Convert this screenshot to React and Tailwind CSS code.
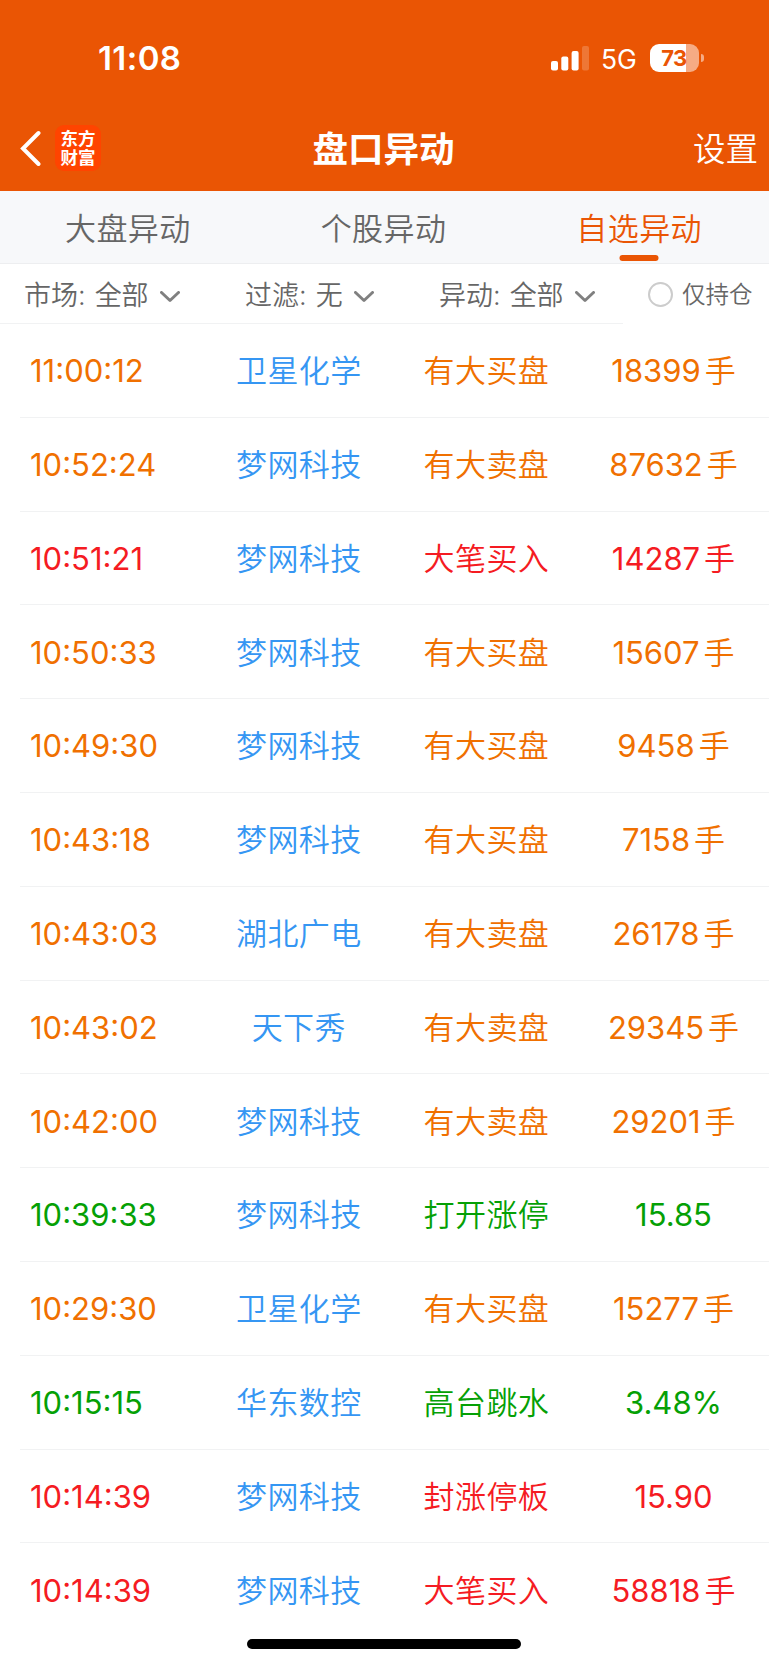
import { useState } from "react"
import clsx from "clsx"

const TABS = ["大盘异动", "个股异动", "自选异动"]

const FILTERS = [
  { label: "市场:", value: "全部", className: "w-[221px]" },
  { label: "过滤:", value: "无", className: "w-[194px]" },
  { label: "异动:", value: "全部", className: "w-[184px]" },
]

const COLORS = {
  orange: "text-[#f07000]",
  red: "text-[#f51b22]",
  green: "text-[#05a005]",
}

const ROWS = [
  { time: "11:00:12", name: "卫星化学", type: "有大买盘", value: "18399", unit: "手", color: "orange" },
  { time: "10:52:24", name: "梦网科技", type: "有大卖盘", value: "87632", unit: "手", color: "orange" },
  { time: "10:51:21", name: "梦网科技", type: "大笔买入", value: "14287", unit: "手", color: "red" },
  { time: "10:50:33", name: "梦网科技", type: "有大买盘", value: "15607", unit: "手", color: "orange" },
  { time: "10:49:30", name: "梦网科技", type: "有大买盘", value: "9458", unit: "手", color: "orange" },
  { time: "10:43:18", name: "梦网科技", type: "有大买盘", value: "7158", unit: "手", color: "orange" },
  { time: "10:43:03", name: "湖北广电", type: "有大卖盘", value: "26178", unit: "手", color: "orange" },
  { time: "10:43:02", name: "天下秀", type: "有大卖盘", value: "29345", unit: "手", color: "orange" },
  { time: "10:42:00", name: "梦网科技", type: "有大卖盘", value: "29201", unit: "手", color: "orange" },
  { time: "10:39:33", name: "梦网科技", type: "打开涨停", value: "15.85", color: "green" },
  { time: "10:29:30", name: "卫星化学", type: "有大买盘", value: "15277", unit: "手", color: "orange" },
  { time: "10:15:15", name: "华东数控", type: "高台跳水", value: "3.48%", color: "green" },
  { time: "10:14:39", name: "梦网科技", type: "封涨停板", value: "15.90", color: "red" },
  { time: "10:14:39", name: "梦网科技", type: "大笔买入", value: "58818", unit: "手", color: "red" },
]

const StatusBar = () => (
  <div className="flex h-[105px] items-start justify-between pl-[98px] pr-[65px] pt-[38px]">
    <span className="text-[33px] font-semibold leading-[41px] tracking-[0.4px]">11:08</span>
    <div className="flex h-10 items-center">
      <svg className="h-[25px] w-[38px]" viewBox="0 0 38 25" fill="currentColor" aria-hidden="true">
        <rect x="0" y="15" width="7" height="9.5" rx="2" />
        <rect x="10.3" y="10.5" width="7" height="14" rx="2" />
        <rect x="20.6" y="5" width="7" height="19.5" rx="2" />
        <rect x="31" y="0" width="7" height="24.5" rx="2" opacity="0.2" />
      </svg>
      <span className="ml-[12px] w-[36px] pt-px text-[26.5px] leading-10">5G</span>
      <div className="ml-[13px] flex items-center">
        <div className="flex h-7 w-[49px] items-center justify-center rounded-[9px] bg-linear-to-r from-white from-74% to-[#f6ab84] to-74% pr-px text-[22px] font-bold leading-7 tracking-[-0.5px] text-[#ea5504]">
          73
        </div>
        <div className="ml-[2px] h-2 w-[3px] rounded-r-full bg-[#f6ab84]" />
      </div>
    </div>
  </div>
)

const NavBar = () => (
  <div className="grid h-[86px] grid-cols-[1fr_auto_1fr] items-center px-[11px]">
    <div className="ml-[9px] flex items-center">
      <svg className="h-9 w-[22px]" viewBox="0 0 22 36" fill="none" stroke="currentColor" strokeWidth="4" aria-hidden="true">
        <path d="M18.5 3L3 18.5L18.5 34" strokeLinecap="round" strokeLinejoin="miter" />
      </svg>
      <div className="ml-[13px] flex h-[46px] w-[46px] flex-col items-center justify-center rounded-[9px] bg-[#ff4400] text-[17.5px] font-bold leading-[19px]">
        <span>东方</span>
        <span>财富</span>
      </div>
    </div>
    <h1 className="pr-[2px] pt-[3px] text-[35.5px] font-bold leading-10">盘口异动</h1>
    <button className="justify-self-end pt-[3px] text-[32.5px] font-[350] leading-10">设置</button>
  </div>
)

const Chevron = () => (
  <svg className="mb-[-2px] ml-[11px] h-3 w-5" viewBox="0 0 20 12" fill="none" stroke="#808080" strokeWidth="3" aria-hidden="true">
    <path d="M1.5 1.5L10 9.5L18.5 1.5" strokeLinecap="round" strokeLinejoin="round" />
  </svg>
)

const Row = ({ time, name, type, value, unit, color }) => (
  <li
    className={clsx(
      "ml-5 grid h-[93.8px] grid-cols-[185px_repeat(3,187.6px)] items-center border-b border-[#f1f2f3] pt-[2px] text-center text-[31px] last:border-b-0",
      COLORS[color]
    )}
  >
    <span className="pl-[10px] text-left font-normal">{time}</span>
    <span className="font-[350] tracking-[0.4px] text-[#3596f3]">{name}</span>
    <span className="font-[350] tracking-[0.4px]">{type}</span>
    <span className="flex items-center justify-center gap-1 pr-px font-normal">
      {value}
      {unit && <span className="font-[350]">{unit}</span>}
    </span>
  </li>
)

export default function App() {
  const [activeTab, setActiveTab] = useState(2)
  const [onlyHeld, setOnlyHeld] = useState(false)

  return (
    <div className="flex h-[1665px] w-[769px] flex-col overflow-hidden bg-white font-['Inter','Noto_Sans_CJK_SC',sans-serif]">
      <header className="h-[191px] shrink-0 bg-[#ea5504] text-white">
        <StatusBar />
        <NavBar />
      </header>

      <nav className="grid h-[73px] shrink-0 grid-cols-3 border-b border-[#edeef0] bg-[#f7f8fa] pr-[2px]">
        {TABS.map((tab, i) => (
          <button
            key={tab}
            onClick={() => setActiveTab(i)}
            className={clsx(
              "relative pt-[3px] text-[31px] font-[350] leading-[69px] tracking-[0.4px]",
              i === activeTab ? "text-[#ea5504]" : "text-[#666666]"
            )}
          >
            {tab}
            {i === activeTab && (
              <span className="absolute bottom-[2px] left-1/2 h-[6px] w-[39px] -translate-x-1/2 rounded-full bg-[#ea5504]" />
            )}
          </button>
        ))}
      </nav>

      <div className="flex h-[60px] shrink-0 text-[27px] font-[350] text-[#666666]">
        <div className="flex w-[623px] items-center border-b border-[#f1f2f3] pl-[24px] pt-[5px]">
          {FILTERS.map(({ label, value, className }) => (
            <button key={label} className={clsx("flex items-center", className)}>
              <span className="mr-[9px]">{label}</span>
              <span>{value}</span>
              <Chevron />
            </button>
          ))}
        </div>
        <button onClick={() => setOnlyHeld(!onlyHeld)} className="ml-[25px] flex items-center text-[23.5px]">
          <span
            className={clsx(
              "mr-[9px] h-[25px] w-[25px] rounded-full border-2 border-[#cccccc]",
              onlyHeld && "bg-[#ea5504]"
            )}
          />
          <span className="pt-[2px]">仅持仓</span>
        </button>
      </div>

      <ul className="shrink-0">
        {ROWS.map((row, i) => (
          <Row key={i} {...row} />
        ))}
      </ul>

      <div className="mx-auto mt-[2px] h-[10px] w-[274px] shrink-0 -translate-x-px rounded-full bg-black" />
    </div>
  )
}
